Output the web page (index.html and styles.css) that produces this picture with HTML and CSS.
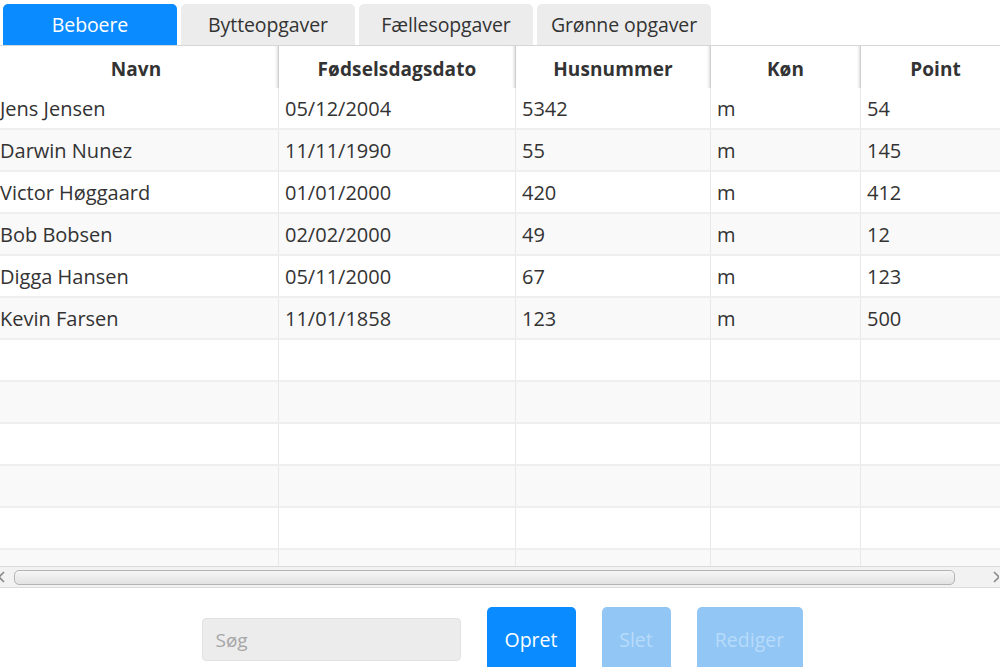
FILE: index.html
```html
<!DOCTYPE html>
<html>
<head>
<meta charset="utf-8">
<link rel="stylesheet" href="styles.css">
</head>
<body>
<div class="app">
  <div class="tabs">
    <div class="tab active">Beboere</div>
    <div class="tab">Bytteopgaver</div>
    <div class="tab">Fællesopgaver</div>
    <div class="tab">Grønne opgaver</div>
  </div>
  <div class="table">
    <div class="grid head">
      <div class="hc">Navn</div>
      <div class="hc">Fødselsdagsdato</div>
      <div class="hc">Husnummer</div>
      <div class="hc">Køn</div>
      <div class="hc">Point</div>
    </div>
    <div class="body">
      <div class="grid row"><div class="c">Jens Jensen</div><div class="c">05/12/2004</div><div class="c">5342</div><div class="c">m</div><div class="c">54</div></div>
      <div class="grid row"><div class="c">Darwin Nunez</div><div class="c">11/11/1990</div><div class="c">55</div><div class="c">m</div><div class="c">145</div></div>
      <div class="grid row"><div class="c">Victor Høggaard</div><div class="c">01/01/2000</div><div class="c">420</div><div class="c">m</div><div class="c">412</div></div>
      <div class="grid row"><div class="c">Bob Bobsen</div><div class="c">02/02/2000</div><div class="c">49</div><div class="c">m</div><div class="c">12</div></div>
      <div class="grid row"><div class="c">Digga Hansen</div><div class="c">05/11/2000</div><div class="c">67</div><div class="c">m</div><div class="c">123</div></div>
      <div class="grid row"><div class="c">Kevin Farsen</div><div class="c">11/01/1858</div><div class="c">123</div><div class="c">m</div><div class="c">500</div></div>
      <div class="grid row"><div class="c"></div><div class="c"></div><div class="c"></div><div class="c"></div><div class="c"></div></div>
      <div class="grid row"><div class="c"></div><div class="c"></div><div class="c"></div><div class="c"></div><div class="c"></div></div>
      <div class="grid row"><div class="c"></div><div class="c"></div><div class="c"></div><div class="c"></div><div class="c"></div></div>
      <div class="grid row"><div class="c"></div><div class="c"></div><div class="c"></div><div class="c"></div><div class="c"></div></div>
      <div class="grid row"><div class="c"></div><div class="c"></div><div class="c"></div><div class="c"></div><div class="c"></div></div>
      <div class="grid row"><div class="c"></div><div class="c"></div><div class="c"></div><div class="c"></div><div class="c"></div></div>
    </div>
    <div class="hscroll">
      <svg class="arrow left" width="8" height="12" viewBox="0 0 8 12"><path d="M6 1 L1 6 L6 11" fill="none" stroke="#8a8a8a" stroke-width="1.6"/></svg>
      <div class="thumb"></div>
      <svg class="arrow right" width="6" height="12" viewBox="0 0 6 12"><path d="M1 1 L6 6 L1 11" fill="none" stroke="#8a8a8a" stroke-width="1.6"/></svg>
    </div>
  </div>
  <div class="controls">
    <div class="search">Søg</div>
    <div class="btn primary">Opret</div>
    <div class="btn disabled slet">Slet</div>
    <div class="btn disabled rediger">Rediger</div>
  </div>
</div>
</body>
</html>
```
FILE: styles.css
```css
html, body {
  margin: 0;
  padding: 0;
  background: #ffffff;
}
body {
  font-family: "Open Sans", "Noto Sans", sans-serif;
  color: #333333;
  overflow: hidden;
  width: 1000px;
  height: 667px;
}
.app {
  width: 1000px;
  height: 667px;
  overflow: hidden;
}
.tabs {
  display: flex;
  align-items: flex-end;
  padding-left: 3px;
  gap: 4px;
  border-bottom: 1px solid #d6d6d6;
  box-sizing: border-box;
  height: 46px;
}
.tab {
  height: 41px;
  width: 174px;
  box-sizing: border-box;
  background: #ececec;
  border-radius: 5px 5px 0 0;
  display: flex;
  align-items: center;
  justify-content: center;
  font-size: 19.5px;
  color: #333;
  letter-spacing: -0.1px;
}
.tab.active {
  background: #0a8bff;
  color: #ffffff;
}
.table {
  width: 1000px;
  overflow: hidden;
}
.grid {
  display: grid;
  grid-template-columns: 285px 237px 195px 150px 150px;
  margin-left: -6px;
}
.head {
  height: 42px;
  background: #ffffff;
}
.hc {
  display: flex;
  align-items: center;
  justify-content: center;
  padding-top: 3px;
  font-weight: 700;
  font-size: 19px;
  letter-spacing: 0.1px;
  border-right: 1px solid #cfcfcf;
  box-shadow: inset -3px 0 3px -2px #d8d8d8;
}
.body {
  height: 478px;
  overflow: hidden;
}
.row {
  height: 42px;
  box-sizing: border-box;
  border-bottom: 2px solid #eeeeee;
}
.row:nth-child(odd) { background: #ffffff; }
.row:nth-child(even) { background: #f9f9f9; }
.c {
  display: flex;
  align-items: center;
  padding-left: 6px;
  font-size: 20px;
  border-right: 1px solid #e8e8e8;
  letter-spacing: 0px;
}
.hscroll {
  background: #f2f2f2;
  border-top: 1px solid #dcdcdc;
  border-bottom: 1px solid #dcdcdc;
  display: flex;
  align-items: center;
  box-sizing: border-box;
  height: 22px;
}
.arrow.left {
  margin-left: -2px;
  margin-right: 8px;
}
.arrow.right {
  margin-left: 38px;
}
.thumb {
  width: 941px;
  height: 15px;
  box-sizing: border-box;
  border: 1px solid #b4b4b4;
  border-radius: 5px;
  background: linear-gradient(#f6f6f6, #e2e2e2);
}
.controls {
  display: flex;
  justify-content: center;
  align-items: flex-start;
  gap: 26px;
  padding-top: 19px;
  padding-left: 4px;
}
.search {
  margin-top: 11px;
  width: 259px;
  height: 43px;
  box-sizing: border-box;
  background: #ececec;
  border: 1px solid #e2e2e2;
  border-radius: 4px;
  color: #a6a6a6;
  font-size: 19px;
  display: flex;
  align-items: center;
  padding-left: 13px;
}
.btn {
  border-radius: 5px;
  font-size: 19.5px;
  display: flex;
  align-items: center;
  justify-content: center;
  padding-bottom: 10px;
  box-sizing: border-box;
  height: 75px;
}
.primary {
  width: 89px;
  background: #0a8bff;
  color: #ffffff;
}
.disabled {
  background: #91c6f5;
  color: #b8dbfa;
}
.slet { width: 69px; }
.rediger { width: 106px; }
```
